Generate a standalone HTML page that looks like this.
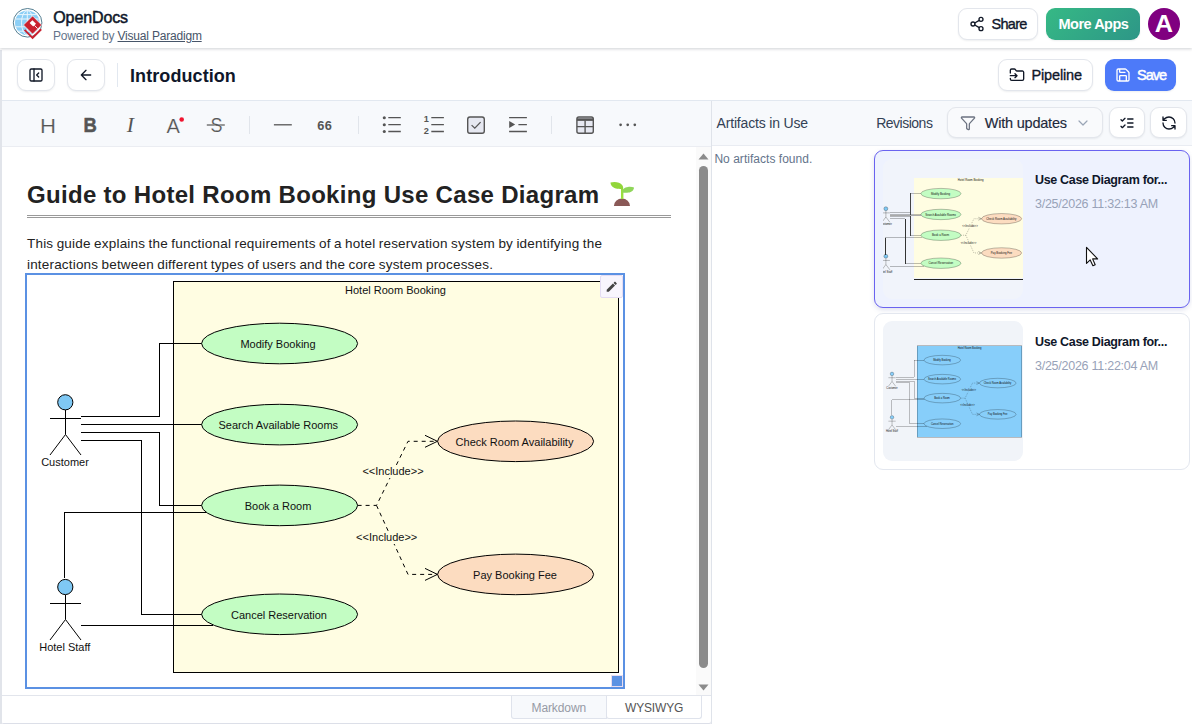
<!DOCTYPE html>
<html lang="en">
<head>
<meta charset="utf-8">
<title>OpenDocs</title>
<style>
*{box-sizing:border-box;margin:0;padding:0}
html,body{width:1192px;height:724px;overflow:hidden;background:#fff;font-family:"Liberation Sans",sans-serif;color:#1e293b}
div,span{white-space:nowrap}
.a{position:absolute}
svg{position:absolute;overflow:visible}
.ic{fill:none;stroke:#111827;stroke-width:2;stroke-linecap:round;stroke-linejoin:round}
#hdr{position:absolute;left:0;top:0;width:1192px;height:48px;background:#fff;box-shadow:0 1px 3px rgba(15,23,42,.2);z-index:5}
#brand{position:absolute;left:53.300px;top:8.500px;font-size:16px;line-height:18px;font-weight:400;color:#0f172a;letter-spacing:-.12px;-webkit-text-stroke:.5px #0f172a}
#powered{position:absolute;left:53px;top:28.500px;font-size:12px;line-height:14px;color:#64748b;letter-spacing:-.2px}
#powered u{color:#475569}
.btn{position:absolute;border:1px solid #e3e6ec;border-radius:9px;background:#fff;box-shadow:0 1px 2px rgba(15,23,42,.07)}
.bt{position:absolute;font-size:14.5px;line-height:18px;color:#0f172a;-webkit-text-stroke:.35px currentColor}
#bar2{position:absolute;left:0;top:50px;width:1192px;height:51px;background:#fff;border-bottom:1px solid #e2e8f0}
#title{position:absolute;left:130px;top:65px;font-size:18px;line-height:22px;font-weight:700;color:#0f172a;letter-spacing:.08px}
#edtb{position:absolute;left:2px;top:101px;width:709px;height:46px;background:#f7f9fc;border-bottom:1px solid #ebedf2}
#h1{position:absolute;left:27px;top:180px;font-size:24px;line-height:30px;font-weight:700;color:#222;letter-spacing:.31px}
#h1line{position:absolute;left:27px;top:215px;width:644px;height:3px;border-top:1px solid #999;border-bottom:1px solid #999}
.para{position:absolute;left:27px;font-size:13.5px;line-height:16px;color:#222}
#imgbox{position:absolute;left:25px;top:273px;width:600px;height:416px;border:2px solid #5b91e3;background:#fff}
#right{position:absolute;left:711px;top:101px;width:481px;height:623px;background:#fff}
</style>
</head>
<body>
<!-- HEADER -->
<div id="hdr">
<svg style="left:12px;top:7px" width="32" height="33" viewBox="12 7 32 33">
  <circle cx="27.600" cy="22.800" r="14.300" fill="#fff" stroke="#3f6f85" stroke-width="0.900"/>
  <circle cx="27.300" cy="22.800" r="12.300" fill="#8ccff6"/>
  <g fill="none" stroke="#e8f5fd" stroke-width="1">
    <ellipse cx="27.300" cy="22.800" rx="5.800" ry="12.300"/>
    <path d="M27.300 10.500V35.100M15.500 19H39.500M15.500 26.800H39.500M18 14.600H36.600M18 31.200H36.600"/>
  </g>
  <path d="M32.600 15.900L41.700 25L32.600 34.100L23.500 25Z" fill="#c9212f" stroke="#fff" stroke-width="0.600"/>
  <path d="M24.600 29.800L32.600 37.800L41.200 29.300" fill="none" stroke="#c9212f" stroke-width="1.900"/>
  <path d="M32.400 20.200L36 23.800L33.200 26.600L29.600 23Z" fill="#fff"/>
  <path d="M34.300 25.300L37.600 28.600" stroke="#fff" stroke-width=".900" fill="none"/>
</svg>
  <div id="brand">OpenDocs</div>
  <div id="powered">Powered by <u>Visual Paradigm</u></div>
  <div class="btn" style="left:958px;top:8px;width:80px;height:32px"></div>
<svg class="ic" style="left:969px;top:16px" width="16" height="16" viewBox="0 0 24 24"><circle cx="18" cy="5" r="3"/><circle cx="6" cy="12" r="3"/><circle cx="18" cy="19" r="3"/><path d="M8.590 13.510L15.420 17.490M15.410 6.510L8.590 10.490"/></svg>
  <div class="bt" style="left:991.600px;top:15px;letter-spacing:-.75px">Share</div>
  <div class="btn" style="left:1046px;top:8px;width:94px;height:32px;border:0;background:linear-gradient(135deg,#36b985,#2d9687)"></div>
  <div class="bt" style="left:1058.5px;top:15px;letter-spacing:-.5px;font-weight:700;color:#fff;-webkit-text-stroke:0">More Apps</div>
  <div class="a" style="left:1148px;top:8px;width:32px;height:32px;border-radius:50%;background:#800080"></div>
  <div class="a" style="left:1155px;top:12px;width:18px;text-align:center;font-size:23px;line-height:24px;font-weight:700;color:#fff;display:flex;justify-content:center;transform:scaleX(1.1)">A</div>
</div>
<!-- SECOND BAR -->
<div id="bar2"></div>
<div class="btn" style="left:17px;top:59px;width:38px;height:32px"></div>
<div class="btn" style="left:67px;top:59px;width:38px;height:32px"></div>
<div class="a" style="left:117px;top:63px;width:1px;height:24px;background:#e2e8f0"></div>
<div id="title">Introduction</div>
<div class="btn" style="left:998px;top:59px;width:95px;height:32px"></div>
<div class="bt" style="left:1031.5px;top:66px;letter-spacing:-.16px">Pipeline</div>
<div class="btn" style="left:1105px;top:59px;width:71px;height:32px;border:0;background:#4d7af9"></div>
<div class="bt" style="left:1137px;top:66px;letter-spacing:-1px;color:#fff;-webkit-text-stroke:.5px #fff">Save</div>
<svg class="ic" style="left:28px;top:67px" width="16" height="16" viewBox="0 0 24 24"><rect x="3" y="3" width="18" height="18" rx="2"/><path d="M9 3v18M16 15l-3-3 3-3"/></svg>
<svg class="ic" style="left:78px;top:67px" width="16" height="16" viewBox="0 0 24 24"><path d="M12 19l-7-7 7-7M19 12H5"/></svg>
<svg class="ic" style="left:1008.700px;top:67px" width="16" height="16" viewBox="0 0 24 24"><path d="M2 9V5a2 2 0 0 1 2-2h3.900a2 2 0 0 1 1.690.900l.810 1.200a2 2 0 0 0 1.670.900H20a2 2 0 0 1 2 2v10a2 2 0 0 1-2 2H4a2 2 0 0 1-2-2v-1M2 13h10M9 16l3-3-3-3"/></svg>
<svg class="ic" style="left:1115px;top:67px;stroke:#fff" width="16" height="16" viewBox="0 0 24 24"><path d="M15.200 3a2 2 0 0 1 1.400.600l3.800 3.800a2 2 0 0 1 .600 1.400V19a2 2 0 0 1-2 2H5a2 2 0 0 1-2-2V5a2 2 0 0 1 2-2zM17 21v-7a1 1 0 0 0-1-1H8a1 1 0 0 0-1 1v7M7 3v4a1 1 0 0 0 1 1h7"/></svg>
<!-- EDITOR -->
<div id="edtb"></div>
<svg style="left:0;top:101px" width="711" height="46" viewBox="0 101 711 46">
<g fill="none" stroke="#555" stroke-width="1.400">
  <path d="M206.800 125H224.800" stroke-width="1.200"/>
  <path d="M273.900 124.800H291.800" stroke-width="1.300"/>
</g>
<circle cx="181.700" cy="119.500" r="2.300" fill="#f0142f"/>
<g font-family="Liberation Sans, sans-serif" fill="#555">
  <text x="83.400" y="132.300" font-size="20.500" font-weight="700" textLength="13.300" lengthAdjust="spacingAndGlyphs" stroke="#555" stroke-width=".500" stroke-linejoin="round">B</text>
  <g stroke="#f7f9fc" stroke-width=".200" font-size="21">
  <text x="40.100" y="132.500" textLength="16" lengthAdjust="spacingAndGlyphs">H</text>
  <text x="166.600" y="132.500" textLength="13.400" lengthAdjust="spacingAndGlyphs">A</text>
  <text x="210.400" y="132.300" font-size="20.500" textLength="12" lengthAdjust="spacingAndGlyphs">S</text>
  <text x="126.800" y="132.300" font-family="Liberation Serif, serif" font-style="italic" font-size="21.500" stroke="none">I</text>
  </g>
  <text x="317.300" y="130" font-size="12.800" font-weight="700" letter-spacing="0.400">66</text>
</g>
<g stroke="#e1e5eb" stroke-width="1" shape-rendering="crispEdges">
  <path d="M249.500 116V134M358.500 116V134M551.500 116V134"/>
</g>
<!-- UL -->
<g fill="#555">
  <circle cx="384.300" cy="117.700" r="1.550"/><circle cx="384.300" cy="124.700" r="1.550"/><circle cx="384.300" cy="131.500" r="1.550"/>
</g>
<g fill="none" stroke="#555" stroke-width="1.300">
  <path d="M388.300 117.700H400.800M388.300 124.700H400.800M388.300 131.500H400.800"/>
  <path d="M431.300 117.700H443.900M431.300 124.700H443.900M431.300 131.500H443.900"/>
  <rect x="467.700" y="117" width="16.600" height="16.200" rx="2.200" fill="#e6e8f1" stroke-width="1.400"/>
  <path d="M471.600 125.100L474.800 128.100L480.600 122.100" stroke-width="1.300"/>
  <path d="M509.100 117.700H526.900M518.400 124.700H526.900M509.100 131.500H526.900"/>
  <path d="M620.600 124.800h0.010M627.700 124.800h0.010M634.800 124.800h0.010" stroke-width="2.700" stroke-linecap="round"/>
</g>
<path d="M509.200 121.100L515.200 124.600L509.200 128.100Z" fill="#555"/>
<g font-family="Liberation Sans, sans-serif" fill="#555" font-weight="700" font-size="9.200">
  <text x="423.700" y="122.300">1</text>
  <text x="423.700" y="133.700">2</text>
</g>
<!-- table -->
<rect x="576.900" y="117" width="16.400" height="16.200" rx="2" fill="#e6e8f1" stroke="#555" stroke-width="1.400"/>
<path d="M576.900 119.600H593.300" stroke="#555" stroke-width="2.600" fill="none"/>
<path d="M576.900 126.600H593.300M585.100 120.500V133.200" stroke="#555" stroke-width="1.400" fill="none"/>
</svg>
<div id="h1">Guide to Hotel Room Booking Use Case Diagram</div>
<svg style="left:608px;top:180px" width="28" height="28" viewBox="608 180 28 28" role="img" aria-label="seedling">
  <path d="M613.900 205.900A8.050 7.400 0 0 1 630 205.900Z" fill="#8a5957"/>
  <path d="M622.200 199V189" stroke="#9adf3e" stroke-width="2.400" fill="none"/>
  <path d="M610.500 182.600C614 181.700 620 181.800 622.300 185.200C623.200 186.600 623.300 188 623.200 189.200C619 189.400 613.500 188.800 611.400 185.600C610.800 184.700 610.500 183.600 610.500 182.600Z" fill="#92d63a"/>
  <path d="M622.200 192.600C622 189.500 624.500 187.200 628 186.900C630.300 186.700 632.600 186.900 634 187.400C634 190 631.500 192.200 628.500 192.600C626.300 192.900 624 192.800 622.200 192.600Z" fill="#8fd65a"/>
</svg>
<div id="h1line"></div>
<div class="para" style="top:236px;letter-spacing:.202px;word-spacing:-.6px">This guide explains the functional requirements of a hotel reservation system by identifying the</div>
<div class="para" style="top:257px;letter-spacing:.182px;word-spacing:-.6px">interactions between different types of users and the core system processes.</div>
<div id="imgbox"></div>
<svg width="0" height="0" style="position:absolute">
<defs>
<symbol id="dg" viewBox="27 275 596 412" preserveAspectRatio="none">
  <g shape-rendering="crispEdges" stroke="#000" stroke-width="1" fill="none">
    <rect x="173.5" y="281.5" width="445" height="391" style="fill:var(--sys,#fffde2);stroke:var(--rs,#000)"/>
    <path d="M80.5 416.5H159.5V343.5H202"/>
    <path d="M80.5 424.5H202"/>
    <path d="M80.5 432.5H159.5V505.5H202"/>
    <path d="M80.5 440.5H141.5V614.5H202"/>
    <path d="M64.5 578V512.5H207"/>
    <path d="M80.5 625.5H213"/>
    <path d="M65.5 410V434.5M50 418.5H81M65.500 434.5L50 455M65.5 434.5L81 455" shape-rendering="auto"/>
    <path d="M65.500 595V619.500M50 603.5H81M65.5 619.5L50 640M65.5 619.5L81 640" shape-rendering="auto"/>
  </g>
  <g stroke="#000" stroke-width="1" style="fill:var(--uc,#c3fdc3)">
    <ellipse cx="279.6" cy="343.5" rx="78" ry="20.300"/>
    <ellipse cx="279.6" cy="424.6" rx="78" ry="20.300"/>
    <ellipse cx="279.6" cy="505.400" rx="78" ry="20.300"/>
    <ellipse cx="279.6" cy="614.3" rx="78" ry="20.300"/>
  </g>
  <g stroke="#000" stroke-width="1" style="fill:var(--inc,#fcdcc0)">
    <ellipse cx="515.6" cy="441.300" rx="78" ry="20.300"/>
    <ellipse cx="515.6" cy="574.400" rx="78" ry="20.300"/>
  </g>
  <g stroke="#000" stroke-width="1" style="fill:var(--hd,#7fc8f4)">
    <circle cx="65.300" cy="402.300" r="7.600"/>
    <circle cx="65.300" cy="587" r="7.600"/>
  </g>
  <g stroke="#000" stroke-width="1" fill="none">
    <path d="M357.6 505.400H376.500L408 441.300H437" stroke-dasharray="4 4"/>
    <path d="M376.500 505.400L408 574.400H437" stroke-dasharray="4 4"/>
    <path d="M425 435.300L437.400 441.300L425 447.300M425 568.400L437.400 574.400L425 580.400"/>
  </g>
  <rect x="362" y="465" width="62" height="13" style="fill:var(--sys,#fffde2)"/>
  <rect x="356" y="531" width="62" height="13" style="fill:var(--sys,#fffde2)"/>
  <g font-family="Liberation Sans, sans-serif" font-size="11" fill="#111" text-anchor="middle">
    <text x="395.500" y="294.400">Hotel Room Booking</text>
    <text x="278" y="347.800">Modify Booking</text>
    <text x="278.300" y="428.800">Search Available Rooms</text>
    <text x="278" y="509.800">Book a Room</text>
    <text x="279" y="618.800">Cancel Reservation</text>
    <text x="514.500" y="445.800">Check Room Availability</text>
    <text x="515" y="578.800">Pay Booking Fee</text>
    <text x="393" y="474.700">&lt;&lt;Include&gt;&gt;</text>
    <text x="386.700" y="540.700">&lt;&lt;Include&gt;&gt;</text>
    <text x="65" y="465.800">Customer</text>
    <text x="64.800" y="651">Hotel Staff</text>
  </g>
</symbol>
</defs>
</svg>
<svg style="left:27px;top:275px" width="596" height="412"><use href="#dg" x="0" y="0" width="596" height="412"/></svg>
<div class="a" style="left:600px;top:275px;width:23px;height:23px;background:#f8f5fd;border:1px solid #e4dcf3;border-radius:2px"></div>
<svg style="left:604.600px;top:279.800px" width="13.500" height="13.500" viewBox="0 0 24 24"><path fill="#444" d="M3 17.250V21h3.750L17.810 9.940l-3.750-3.750L3 17.250zM20.710 7.040a1 1 0 0 0 0-1.410l-2.340-2.340a1 1 0 0 0-1.410 0l-1.830 1.830 3.750 3.750 1.830-1.830z"/></svg>
<div class="a" style="left:611px;top:675px;width:12px;height:12px;background:#5c92e3;border:1px solid #e9dcef"></div>
<!-- scrollbar -->
<div class="a" style="left:696px;top:147px;width:15px;height:548px;background:#fafafa"></div>
<div class="a" style="left:699px;top:166px;width:9px;height:502px;border-radius:5px;background:#8b8b8b"></div>
<svg style="left:698px;top:153px" width="11" height="7" viewBox="0 0 11 7"><path d="M0.500 6.500L5.500 0.500L10.500 6.500Z" fill="#8b8b8b"/></svg>
<svg style="left:698px;top:684px" width="11" height="7" viewBox="0 0 11 7"><path d="M0.500 0.500L5.500 6.500L10.500 0.500Z" fill="#8b8b8b"/></svg>
<!-- bottom tabs -->
<div class="a" style="left:1px;top:695px;width:711px;height:29px;border-top:1px solid #e2e5ec;border-right:1px solid #dde1ea;border-bottom:1px solid #dcdfe8;border-radius:0 0 3px 3px;background:#fff"></div>
<div class="a" style="left:511px;top:696px;width:96px;height:23px;background:#f7f9fc;border:1px solid #dfe3ec;border-top:0;border-radius:0 0 0 3px"></div>
<div class="a" style="left:606px;top:696px;width:96px;height:23px;background:#fff;border:1px solid #dfe3ec;border-top:0;border-radius:0 0 3px 3px"></div>
<div class="a" style="left:531.500px;top:701px;font-size:12px;line-height:14px;color:#969aa5;letter-spacing:-.1px">Markdown</div>
<div class="a" style="left:625px;top:701px;font-size:12px;line-height:14px;color:#555;letter-spacing:-.16px">WYSIWYG</div>
<div class="a" style="left:0;top:50px;width:2px;height:674px;background:#e1e4ea"></div>
<!-- RIGHT -->
<div id="right"></div>
<div class="a" style="left:711px;top:101px;width:481px;height:45px;background:#f7f9fc;border-bottom:1px solid #e9ecf2"></div>
<div class="a" style="left:711px;top:101px;width:1px;height:623px;background:#dfe3ea"></div>
<div class="a" style="left:716.500px;top:115px;font-size:14px;line-height:16px;color:#334155;letter-spacing:-.17px">Artifacts in Use</div>
<div class="a" style="left:876.200px;top:115px;font-size:14px;line-height:16px;color:#334155;letter-spacing:-.5px">Revisions</div>
<div class="btn" style="left:947px;top:107px;width:156.300px;height:31.400px;background:#f9fafc"></div>
<svg class="ic" style="left:959.900px;top:114.600px;stroke:#6b7280;stroke-width:1.900" width="16" height="16" viewBox="0 0 24 24"><path d="M10 20a1 1 0 0 0 .553.895l2 1A1 1 0 0 0 14 21v-7a2 2 0 0 1 .517-1.341L21.740 4.670A1 1 0 0 0 21 3H3a1 1 0 0 0-.742 1.670l7.225 7.989A2 2 0 0 1 10 14z"/></svg>
<div class="bt" style="left:984.800px;top:114px;letter-spacing:-.22px;-webkit-text-stroke:.15px currentColor;color:#1e293b">With updates</div>
<svg class="ic" style="left:1075.300px;top:115.300px;stroke:#9aa5b6;stroke-width:1.800" width="16" height="16" viewBox="0 0 24 24"><path d="M6 9l6 6 6-6"/></svg>
<div class="btn" style="left:1108.700px;top:107px;width:36.600px;height:31px"></div>
<svg class="ic" style="left:1118.500px;top:115px" width="16" height="16" viewBox="0 0 24 24"><path d="M3 17l2 2 4-4M3 7l2 2 4-4M13 6h8M13 12h8M13 18h8"/></svg>
<div class="btn" style="left:1150.400px;top:107px;width:37px;height:31px"></div>
<svg class="ic" style="left:1160.700px;top:115px" width="16" height="16" viewBox="0 0 24 24"><path d="M21 12a9 9 0 0 0-9-9 9.750 9.750 0 0 0-6.740 2.740L3 8M3 3v5h5M3 12a9 9 0 0 0 9 9 9.750 9.750 0 0 0 6.740-2.740L21 16M16 16h5v5"/></svg>
<div class="a" style="left:714.400px;top:152px;font-size:12px;line-height:14px;color:#64748b;letter-spacing:.03px">No artifacts found.</div>
<!-- card 1 -->
<div class="a" style="left:874px;top:150px;width:316px;height:158px;border:1px solid #6a63f0;border-radius:9px;background:#eef2fe;box-shadow:0 2px 5px rgba(80,90,160,.18)"></div>
<div class="a" style="left:883px;top:159px;width:140px;height:140px;border-radius:9px;background:#f1f4fb;overflow:hidden"><svg style="left:-6.600px;top:16.900px;--rs:transparent" width="153.200" height="105.900"><use href="#dg" width="153.200" height="105.900"/></svg><div class="a" style="left:30.800px;top:119.600px;width:110px;height:1px;background:#222"></div><div class="a" style="left:26.800px;top:34px;width:1px;height:43px;background:#444"></div><div class="a" style="left:22.300px;top:60px;width:1px;height:45px;background:#333"></div><div class="a" style="left:2px;top:79px;width:1px;height:17px;background:#333"></div><div class="a" style="left:7px;top:55.500px;width:32px;height:1.500px;background:#aaa"></div></div>
<div class="a" style="left:1035px;top:172px;font-size:12.500px;line-height:16px;font-weight:700;color:#0f172a;letter-spacing:-.33px">Use Case Diagram for...</div>
<div class="a" style="left:1035px;top:196px;font-size:12.500px;line-height:16px;color:#98a2b8;letter-spacing:-.257px">3/25/2026 11:32:13 AM</div>
<!-- card 2 -->
<div class="a" style="left:874px;top:312.500px;width:316px;height:157px;border:1px solid #e3e7ef;border-radius:9px;background:#fff"></div>
<div class="a" style="left:883px;top:321px;width:140px;height:140px;border-radius:9px;background:#f1f4f9;overflow:hidden"><svg style="left:0;top:22.600px;--sys:#87cefa;--uc:#87cefa;--inc:#87cefa;--hd:#87cefa" width="140" height="96.800"><use href="#dg" width="140" height="96.800"/></svg></div>
<div class="a" style="left:1035px;top:334px;font-size:12.500px;line-height:16px;font-weight:700;color:#0f172a;letter-spacing:-.33px">Use Case Diagram for...</div>
<div class="a" style="left:1035px;top:358px;font-size:12.500px;line-height:16px;color:#98a2b8;letter-spacing:-.257px">3/25/2026 11:22:04 AM</div>
<!-- cursor -->
<svg style="left:1085px;top:246px" width="15" height="22" viewBox="0 0 15 22"><path d="M1.500 1.300V17.400L5.200 13.900L7.900 19.700L10.200 18.700L7.600 12.900H12.600Z" fill="#fff" stroke="#111" stroke-width="1.100" stroke-linejoin="round"/></svg>
</body>
</html>
